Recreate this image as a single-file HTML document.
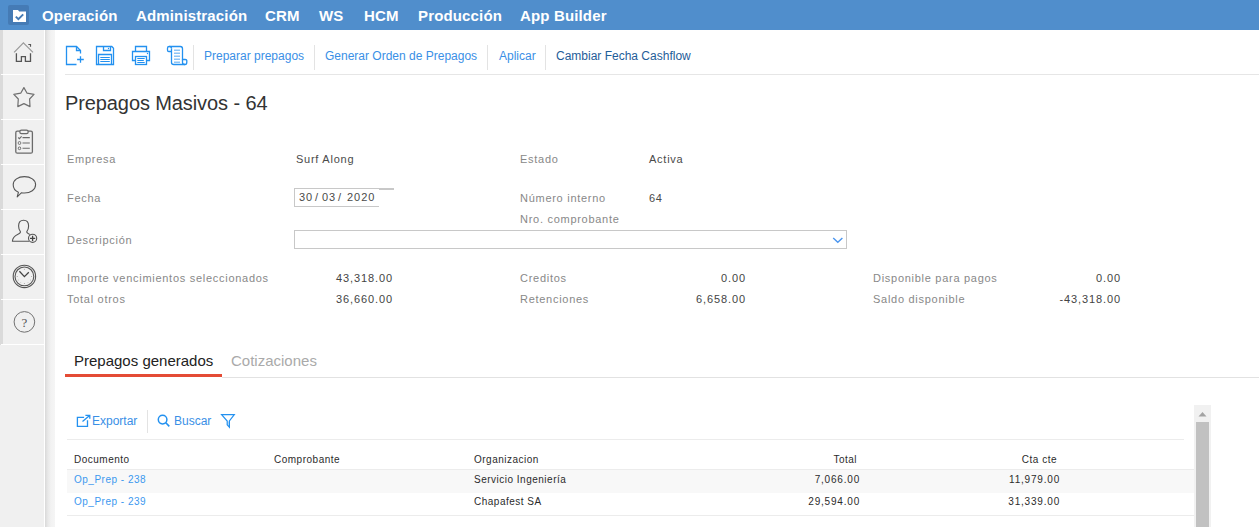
<!DOCTYPE html>
<html><head><meta charset="utf-8">
<style>
html,body{margin:0;padding:0;width:1259px;height:527px;overflow:hidden;background:#fff;font-family:"Liberation Sans",sans-serif;}
.a{position:absolute;white-space:nowrap;}
#hdr{position:absolute;left:0;top:0;width:1259px;height:30px;background:#508ecc;}
.nav{position:absolute;top:7px;font-weight:bold;font-size:15px;color:#fff;line-height:17px;letter-spacing:0.15px;}
#logo{position:absolute;left:8px;top:5px;width:21px;height:20px;background:#457bb5;border-radius:2px;}
#side{position:absolute;left:0;top:30px;width:44px;height:497px;background:#f0f0f0;}
#sidedark{position:absolute;left:0;top:30px;width:3px;height:315px;background:#dadada;}
#sidewhite{position:absolute;left:44px;top:30px;width:1px;height:497px;background:#fff;}
#sideshadow{position:absolute;left:45px;top:30px;width:10px;height:497px;background:linear-gradient(to right,#d9d9d9,#e9e9e9 30%,#f2f2f2 60%,#f5f5f5);}
.sep{position:absolute;left:1px;width:43px;height:1px;background:#fff;}
.tb{position:absolute;top:49px;font-size:12px;line-height:14px;color:#3a8fe6;}
.vsep{position:absolute;width:1px;background:#e3e3e3;}
.lbl{position:absolute;font-size:11px;line-height:13px;color:#888;letter-spacing:0.72px;}
.val{position:absolute;font-size:11px;line-height:13px;color:#4a4a4a;letter-spacing:0.75px;}
.num{position:absolute;font-size:11px;line-height:13px;color:#444;letter-spacing:0.9px;text-align:right;}
.g{position:absolute;font-size:10px;line-height:12px;color:#2b2b2b;letter-spacing:0.5px;}
.gn{position:absolute;font-size:10px;line-height:12px;color:#2b2b2b;letter-spacing:0.8px;text-align:right;}
.gl{position:absolute;font-size:10px;line-height:12px;color:#3b98ef;letter-spacing:0.5px;}
</style></head><body>
<div id="hdr">
  <div id="logo"></div>
  <svg class="a" style="left:12px;top:9px" width="15" height="14" viewBox="0 0 15 14">
    <path d="M1 1h5l1.2 1.5H14V13H1z" fill="#fff"/>
    <path d="M3.8 7.6l2.6 2.6L11.2 5.4" stroke="#457bb5" stroke-width="2" fill="none"/>
  </svg>
  <div class="nav" style="left:42px">Operación</div>
  <div class="nav" style="left:136px">Administración</div>
  <div class="nav" style="left:265px">CRM</div>
  <div class="nav" style="left:319px">WS</div>
  <div class="nav" style="left:364px">HCM</div>
  <div class="nav" style="left:418px">Producción</div>
  <div class="nav" style="left:520px">App Builder</div>
</div>

<div id="side"></div>
<div id="sidedark"></div>
<div id="sidewhite"></div>
<div id="sideshadow"></div>
<div class="sep" style="top:74px"></div>
<div class="sep" style="top:119px"></div>
<div class="sep" style="top:164px"></div>
<div class="sep" style="top:209px"></div>
<div class="sep" style="top:254px"></div>
<div class="sep" style="top:299px"></div>
<div class="sep" style="top:344px"></div>


<svg class="a" style="left:0;top:0" width="1259" height="527" viewBox="0 0 1259 527">
 <g fill="none" stroke-linecap="butt" stroke-linejoin="miter">
  <!-- home -->
  <path d="M14.1 52.4L23.4 42.8L33 52.4" stroke="#9a9a9a" stroke-width="1.2"/>
  <path d="M28.3 44.5H30.5V46.7" stroke="#555" stroke-width="1.2"/>
  <path d="M16.4 53.2V61.3H21.4V56.6H25.4V61.3H30.5V53.2" stroke="#555" stroke-width="1.3"/>
  <!-- star -->
  <path d="M23.9 87.6L27.1 93.2L34 94.4L29.6 99L30 106.6L23.9 103.6L17.8 106.6L18.3 99L13.8 94.4L20.7 93.2Z" stroke="#707070" stroke-width="1.2" stroke-linejoin="round"/>
  <!-- clipboard -->
  <rect x="15.8" y="131.2" width="16.6" height="22" rx="1.5" stroke="#6a6a6a" stroke-width="1.3"/>
  <rect x="19.8" y="130.2" width="8.4" height="3.4" rx="1.7" fill="#f0f0f0" stroke="#6a6a6a" stroke-width="1.2"/>
  <path d="M18.2 137.5l1.2 1.2l2.2-2.4M22.5 137.6H29.8M22.5 143H29.8M22.5 148.3H29.8" stroke="#6a6a6a" stroke-width="1.1"/>
  <rect x="18.3" y="141.6" width="2.4" height="2.8" rx="1" stroke="#6a6a6a" stroke-width="1"/>
  <rect x="18.3" y="147" width="2.4" height="2.6" rx="1" stroke="#6a6a6a" stroke-width="1"/>
  <!-- chat -->
  <path d="M18.4 192.3C14.6 190.6 13.2 188 13.2 184.8C13.2 180 18.2 176.6 24.4 176.6C30.6 176.6 35.6 180 35.6 184.8C35.6 189.6 30.6 193 24.4 193C23.2 193 22.2 192.9 21.6 192.7L17.2 196.8Z" stroke="#555" stroke-width="1.1" stroke-linejoin="round"/>
  <!-- user add -->
  <path d="M29.2 241.3H12.4C12.6 237.4 14.8 235.6 18 234.2C20.2 233.3 20.6 232.6 20.4 231.6C19.2 230.2 18.6 228.5 18.6 226C18.6 222.4 20.4 220.3 23.6 220.3C26.8 220.3 28.6 222.4 28.6 226C28.6 228.5 28 230.2 26.8 231.6C26.6 232.6 27.2 233.3 29.8 234.4" stroke="#555" stroke-width="1.1" stroke-linejoin="round"/>
  <circle cx="32.6" cy="238.3" r="4.1" stroke="#555" stroke-width="1.1" fill="#f0f0f0"/>
  <path d="M32.6 235.7V240.9M30 238.3H35.2" stroke="#444" stroke-width="1.3"/>
  <!-- clock -->
  <circle cx="24.4" cy="276.4" r="11.2" stroke="#555" stroke-width="1.1"/>
  <circle cx="24.4" cy="276.4" r="9.4" stroke="#555" stroke-width="1.1"/>
  <path d="M19.4 271.2L24.4 276.6L28.8 272.2" stroke="#444" stroke-width="1.3"/>
  <g fill="#999" stroke="none">
   <circle cx="24.4" cy="269.2" r="0.5"/><circle cx="24.4" cy="283.6" r="0.5"/><circle cx="17.2" cy="276.4" r="0.5"/><circle cx="31.6" cy="276.4" r="0.5"/>
   <circle cx="20.8" cy="282.6" r="0.45"/><circle cx="28" cy="282.6" r="0.45"/><circle cx="18.2" cy="280" r="0.45"/><circle cx="30.6" cy="280" r="0.45"/>
  </g>
  <!-- help -->
  <circle cx="24.4" cy="321.9" r="10.3" stroke="#707070" stroke-width="1"/>
 </g>
</svg>
<div class="a" style="left:21.6px;top:314.5px;font-family:'Liberation Serif',serif;font-size:13px;line-height:15px;color:#555">?</div>

<!-- toolbar -->
<svg class="a" style="left:0;top:0" width="1259" height="527" viewBox="0 0 1259 527">
 <g fill="none" stroke="#2391f0" stroke-width="1.3">
  <!-- new doc -->
  <path d="M76.5 64.5H66.5V46.5H76.5L80.5 50.5V53.5"/>
  <path d="M76.5 46.5V50.5H80.5"/>
  <path d="M80.5 56.3V62.8M77.1 59.5H83.8"/>
  <!-- save -->
  <path d="M96.5 46.5H111.8L113.5 48.2V64.5H96.5Z"/>
  <path d="M103.5 46.5V50.5H110.5V46.5"/>
  <path d="M98.5 64.5V54.5H111.5V64.5"/>
  <path d="M100.3 57.5H109.8M100.3 59.5H109.8M100.3 61.5H109.8" stroke-width="1"/>
  <!-- printer -->
  <path d="M135.5 51.5V46.5H146.5V51.5"/>
  <path d="M135.5 60.5H132.5V51.5H149.5V60.5H146.5"/>
  <rect x="135.5" y="56.5" width="11" height="8"/>
  <path d="M137.3 58.5H144.7M137.3 60.5H143.8M137.3 62.5H144.7" stroke-width="1"/>
  <!-- scroll -->
  <path d="M171.5 48.5V62.5C171.5 63.8 172.4 64.5 173.8 64.5H185C186.2 64.5 186.8 63.6 186.8 62.2V60.6C186.8 59.8 186.2 59.5 185.2 59.5H182.5V48.8C182.5 47.3 181.8 46.5 180.4 46.5H169.2C168 46.5 167.5 47.1 167.5 48.3V50.2C167.5 51 167.9 51.5 168.8 51.5H171.5"/>
  <path d="M182.5 59.5V62.5C182.5 63.8 183.6 64.5 185 64.5"/>
  <path d="M171.5 48.5C171.5 47.2 171 46.5 169.5 46.5"/>
 </g>
 <g fill="#8cc4f6">
  <rect x="174" y="49.5" width="6" height="1.5"/>
  <rect x="174" y="52.5" width="6" height="1.5"/>
  <rect x="174" y="55.5" width="6" height="1.5"/>
  <rect x="174" y="58.5" width="6" height="1.5"/>
  <rect x="174" y="61.5" width="6" height="1.5"/>
 </g>
 <g fill="#2391f0" stroke="none">
  <circle cx="108.5" cy="48.5" r="0.7"/>
  <circle cx="147.5" cy="53.5" r="0.7"/>
 </g>
 <!-- grid toolbar icons -->
 <g fill="none" stroke="#2391f0" stroke-width="1.3">
  <path d="M84.1 417.3H77.4V426.4H87.5V420.3"/>
  <path d="M82.5 421.4L89.6 415.4M85.4 415.3H89.8V418.7"/>
  <circle cx="162.6" cy="419.6" r="4.3" stroke-width="1.5"/>
  <path d="M165.8 422.8L169.3 426.4" stroke-width="1.6"/>
  <path d="M227.2 421.5V424.8L229.4 427V421.5Z" fill="#cfe3f7" stroke="none"/><path d="M221.6 414.7H234.3L229.4 421V427.2L227.2 424.8V421Z" stroke-linejoin="miter" stroke-width="1.2"/>
 </g>
</svg>

<div class="tb" style="left:204px">Preparar prepagos</div>
<div class="tb" style="left:325px">Generar Orden de Prepagos</div>
<div class="tb" style="left:499px">Aplicar</div>
<div class="tb" style="left:556px;color:#1f5d99">Cambiar Fecha Cashflow</div>
<div class="vsep" style="left:193px;top:45px;height:25px"></div>
<div class="vsep" style="left:314px;top:45px;height:25px"></div>
<div class="vsep" style="left:487px;top:45px;height:25px"></div>
<div class="vsep" style="left:545px;top:45px;height:25px"></div>
<div class="a" style="left:65px;top:74px;width:1194px;height:1px;background:#e6e6e6"></div>

<div class="a" style="left:65px;top:92px;font-size:20px;line-height:23px;color:#333;font-weight:normal;letter-spacing:-0.1px">Prepagos Masivos - 64</div>

<!-- form -->
<div class="lbl" style="left:67px;top:153px">Empresa</div>
<div class="val" style="left:296px;top:153px">Surf Along</div>
<div class="lbl" style="left:520px;top:153px">Estado</div>
<div class="val" style="left:649px;top:153px">Activa</div>

<div class="lbl" style="left:67px;top:192px">Fecha</div>
<div class="a" style="left:294px;top:188px;width:84px;height:17px;border:1px solid #c8c8c8;border-right:none;"></div>
<div class="a" style="left:379px;top:188px;width:15px;height:2px;background:#c8c8c8"></div>
<div class="val" style="left:299px;top:191px;letter-spacing:1px">30</div><div class="val" style="left:315px;top:191px;letter-spacing:0">/</div><div class="val" style="left:322px;top:191px;letter-spacing:1px">03</div><div class="val" style="left:338px;top:191px;letter-spacing:0">/</div><div class="val" style="left:347px;top:191px;letter-spacing:1px">2020</div>
<div class="lbl" style="left:520px;top:192px">Número interno</div>
<div class="val" style="left:649px;top:192px">64</div>
<div class="lbl" style="left:520px;top:213px">Nro. comprobante</div>

<div class="lbl" style="left:67px;top:234px">Descripción</div>
<div class="a" style="left:294px;top:230px;width:551px;height:17px;border:1px solid #c8c8c8;"></div>
<svg class="a" style="left:832px;top:236px" width="12" height="8"><path d="M1.2 2L5.8 6.3L10.4 2" fill="none" stroke="#4b96f0" stroke-width="1.4"/></svg>

<div class="lbl" style="left:67px;top:272px">Importe vencimientos seleccionados</div>
<div class="num" style="left:293px;width:100px;top:272px">43,318.00</div>
<div class="lbl" style="left:67px;top:293px">Total otros</div>
<div class="num" style="left:293px;width:100px;top:293px">36,660.00</div>
<div class="lbl" style="left:520px;top:272px">Creditos</div>
<div class="num" style="left:646px;width:100px;top:272px">0.00</div>
<div class="lbl" style="left:520px;top:293px">Retenciones</div>
<div class="num" style="left:646px;width:100px;top:293px">6,658.00</div>
<div class="lbl" style="left:873px;top:272px">Disponible para pagos</div>
<div class="num" style="left:1021px;width:100px;top:272px">0.00</div>
<div class="lbl" style="left:873px;top:293px">Saldo disponible</div>
<div class="num" style="left:1021px;width:100px;top:293px">-43,318.00</div>

<!-- tabs -->
<div class="a" style="left:74px;top:352px;font-size:15px;line-height:17px;color:#222">Prepagos generados</div>
<div class="a" style="left:231px;top:352px;font-size:15px;line-height:17px;color:#aaa">Cotizaciones</div>
<div class="a" style="left:65px;top:374px;width:157px;height:3px;background:#e44b35"></div>
<div class="a" style="left:222px;top:377px;width:1037px;height:1px;background:#e2e2e2"></div>

<!-- grid toolbar -->
<div class="a" style="left:92px;top:414px;font-size:12px;line-height:14px;color:#3a8fe6">Exportar</div>
<div class="vsep" style="left:147px;top:410px;height:23px"></div>
<div class="a" style="left:174px;top:414px;font-size:12px;line-height:14px;color:#3a8fe6">Buscar</div>
<div class="a" style="left:67px;top:439px;width:1117px;height:1px;background:#ececec"></div>

<!-- grid -->
<div class="g" style="left:74px;top:454px">Documento</div>
<div class="g" style="left:274px;top:454px">Comprobante</div>
<div class="g" style="left:474px;top:454px">Organizacion</div>
<div class="g" style="left:757px;width:100px;top:454px;text-align:right">Total</div>
<div class="g" style="left:957px;width:100px;top:454px;text-align:right">Cta cte</div>
<div class="a" style="left:67px;top:469px;width:1127px;height:1px;background:#ececec"></div>
<div class="a" style="left:67px;top:470px;width:1127px;height:23px;background:#f8f8f8"></div>
<div class="gl" style="left:74px;top:474px">Op_Prep - 238</div>
<div class="g" style="left:474px;top:474px">Servicio Ingeniería</div>
<div class="gn" style="left:760px;width:100px;top:474px;text-align:right">7,066.00</div>
<div class="gn" style="left:960px;width:100px;top:474px;text-align:right">11,979.00</div>
<div class="gl" style="left:74px;top:496px">Op_Prep - 239</div>
<div class="g" style="left:474px;top:496px">Chapafest SA</div>
<div class="gn" style="left:760px;width:100px;top:496px;text-align:right">29,594.00</div>
<div class="gn" style="left:960px;width:100px;top:496px;text-align:right">31,339.00</div>
<div class="a" style="left:67px;top:515px;width:1127px;height:1px;background:#ececec"></div>

<!-- scrollbar -->
<div class="a" style="left:1194px;top:405px;width:17px;height:122px;background:#f1f1f1"></div>
<div class="a" style="left:1196px;top:422px;width:13px;height:105px;background:#c1c1c1"></div>
<svg class="a" style="left:1198px;top:411px" width="9" height="6"><path d="M0.5 5.5L4.5 1L8.5 5.5z" fill="#a3a3a3"/></svg>

</body></html>
